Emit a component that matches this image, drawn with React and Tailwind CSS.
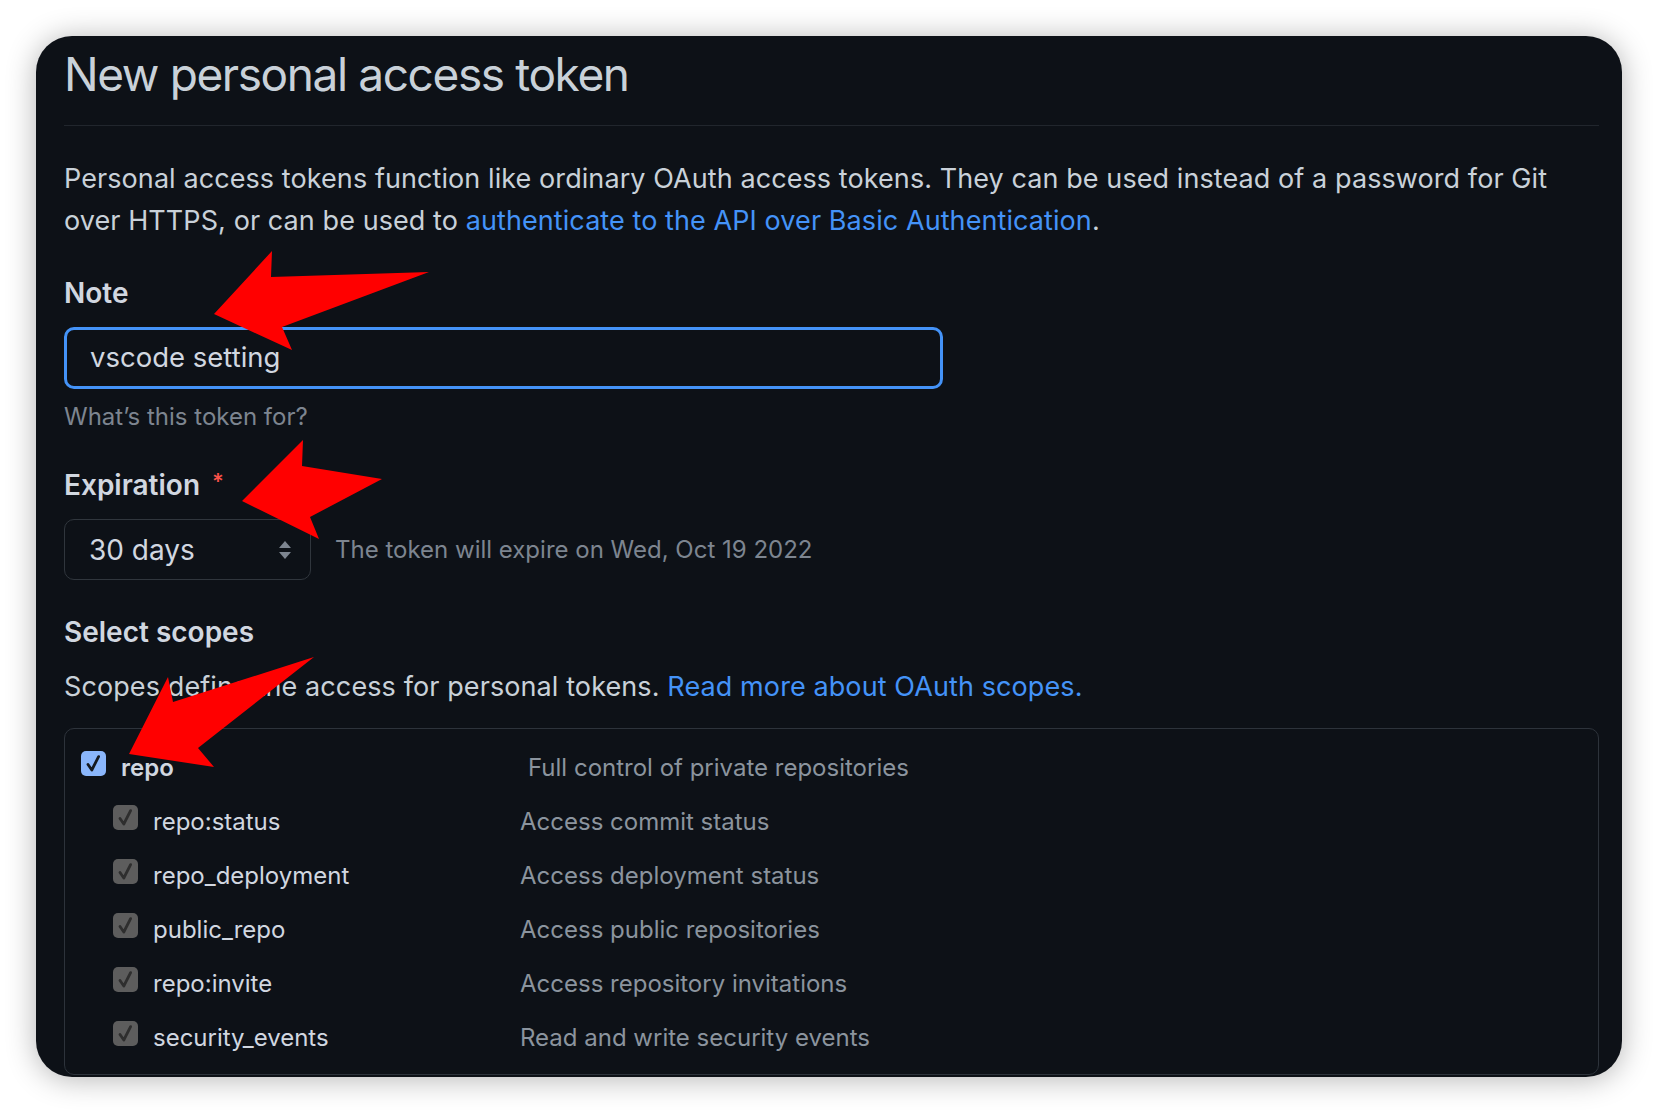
import React from "react";

function Check({ blue }) {
  return (
    <div
      className={
        "w-[25px] h-[25px] rounded-[5px] flex items-center justify-center shrink-0 mb-[3px] " +
        (blue ? "bg-[#8ab6fb]" : "bg-[#5d5d5d]")
      }
    >
      <svg width="21" height="21" viewBox="0 0 21 21">
        <path
          d="M5 11.5 L8.8 17 L15.6 3.6"
          fill="none"
          stroke={blue ? "#15191f" : "#2e2e2e"}
          strokeWidth="2.8"
          strokeLinecap="round"
          strokeLinejoin="round"
        />
      </svg>
    </div>
  );
}

const subs = [
  ["repo:status", "Access commit status"],
  ["repo_deployment", "Access deployment status"],
  ["public_repo", "Access public repositories"],
  ["repo:invite", "Access repository invitations"],
  ["security_events", "Read and write security events"],
];

export default function App() {
  return (
    <div className="relative w-[1658px] h-[1114px] bg-white overflow-hidden font-['Inter','Liberation_Sans',sans-serif]">
      <div className="pt-[36px] pl-[36px]">
        <div className="w-[1586px] h-[1041px] rounded-[36px] bg-[#0d1117] overflow-hidden shadow-[0_2px_30px_rgba(0,0,0,0.3)] pl-[28px] pr-[23px] text-[#c9d1d9]">
          <div className="h-[90px] pt-[10px] border-b border-[#21262d]">
            <h1 className="text-[46px] leading-[56px] font-normal tracking-[-1.4px]">
              New personal access token
            </h1>
          </div>

          <p className="mt-[32px] text-[27px] leading-[42px] tracking-[0.08px]">
            Personal access tokens function like ordinary OAuth access tokens. They can be used instead of a password for Git
            <br />
            over HTTPS, or can be used to{" "}
            <a className="text-[#4493f8]">authenticate to the API over Basic Authentication</a>.
          </p>

          <div className="mt-[31px] h-[40px] flex items-center text-[28px] font-semibold text-[#d1d7e0]">
            Note
          </div>
          <div className="mt-[14px] w-[879px] h-[62px] rounded-[10px] border-[3px] border-[#4493f8] flex items-center pl-[23px] text-[27.5px] text-[#d1d7e0]">
            vscode setting
          </div>
          <div className="mt-[10px] h-[36px] flex items-center text-[24px] text-[#7d8590]">
            What’s this token for?
          </div>

          <div className="mt-[30px] h-[40px] flex items-center text-[28px] font-semibold text-[#d1d7e0]">
            Expiration
            <span className="ml-[12px] text-[22px] text-[#f85149] mb-[8px]">*</span>
          </div>
          <div className="mt-[14px] flex items-center">
            <div className="w-[247px] h-[61px] rounded-[10px] border-[1.5px] border-[#30363d] flex items-center justify-between pl-[24px] pr-[18px] text-[28px] text-[#d1d7e0]">
              <span>30 days</span>
              <svg width="14" height="22" viewBox="0 0 14 22">
                <path d="M7 2 L13 9 L1 9 Z" fill="#7d8590" />
                <path d="M7 20 L13 13 L1 13 Z" fill="#7d8590" />
              </svg>
            </div>
            <span className="ml-[24px] text-[24px] text-[#7d8590]">
              The token will expire on Wed, Oct 19 2022
            </span>
          </div>

          <div className="mt-[32px] h-[40px] flex items-center text-[28px] font-semibold text-[#d1d7e0]">
            Select scopes
          </div>
          <div className="mt-[15px] h-[40px] flex items-center text-[27px] tracking-[0.1px]">
            <span>
              Scopes define the access for personal tokens.{" "}
              <a className="text-[#4493f8]">Read more about OAuth scopes.</a>
            </span>
          </div>

          <div className="mt-[21px] w-[1535px] h-[347px] border border-[#2d333b] rounded-[10px] pt-[9px]">
            <div className="h-[54px] flex items-center">
              <div className="w-[463px] flex items-center pl-[16px]">
                <Check blue />
                <span className="ml-[15px] mt-[6px] text-[24px] font-semibold text-[#d1d7e0]">repo</span>
              </div>
              <span className="mt-[6px] text-[24px] text-[#8b949e]">Full control of private repositories</span>
            </div>
            {subs.map(([name, desc]) => (
              <div key={name} className="h-[54px] flex items-center">
                <div className="w-[455px] flex items-center pl-[48px]">
                  <Check />
                  <span className="ml-[15px] mt-[6px] text-[24px] text-[#d1d7e0]">{name}</span>
                </div>
                <span className="mt-[6px] text-[24px] text-[#8b949e]">{desc}</span>
              </div>
            ))}
          </div>
        </div>
      </div>

      <svg
        className="absolute left-0 top-0 pointer-events-none"
        width="1658"
        height="1114"
        viewBox="0 0 1658 1114"
      >
        <polygon points="214,314 272,251 271,277 429,272 282,327 292,350" fill="#ff0000" />
        <polygon points="242,501 303,440 302,466 382,479 310,517 319,539" fill="#ff0000" />
        <polygon points="129,754 168,677 173,702 314,657 198,748 214,767" fill="#ff0000" />
      </svg>
    </div>
  );
}
